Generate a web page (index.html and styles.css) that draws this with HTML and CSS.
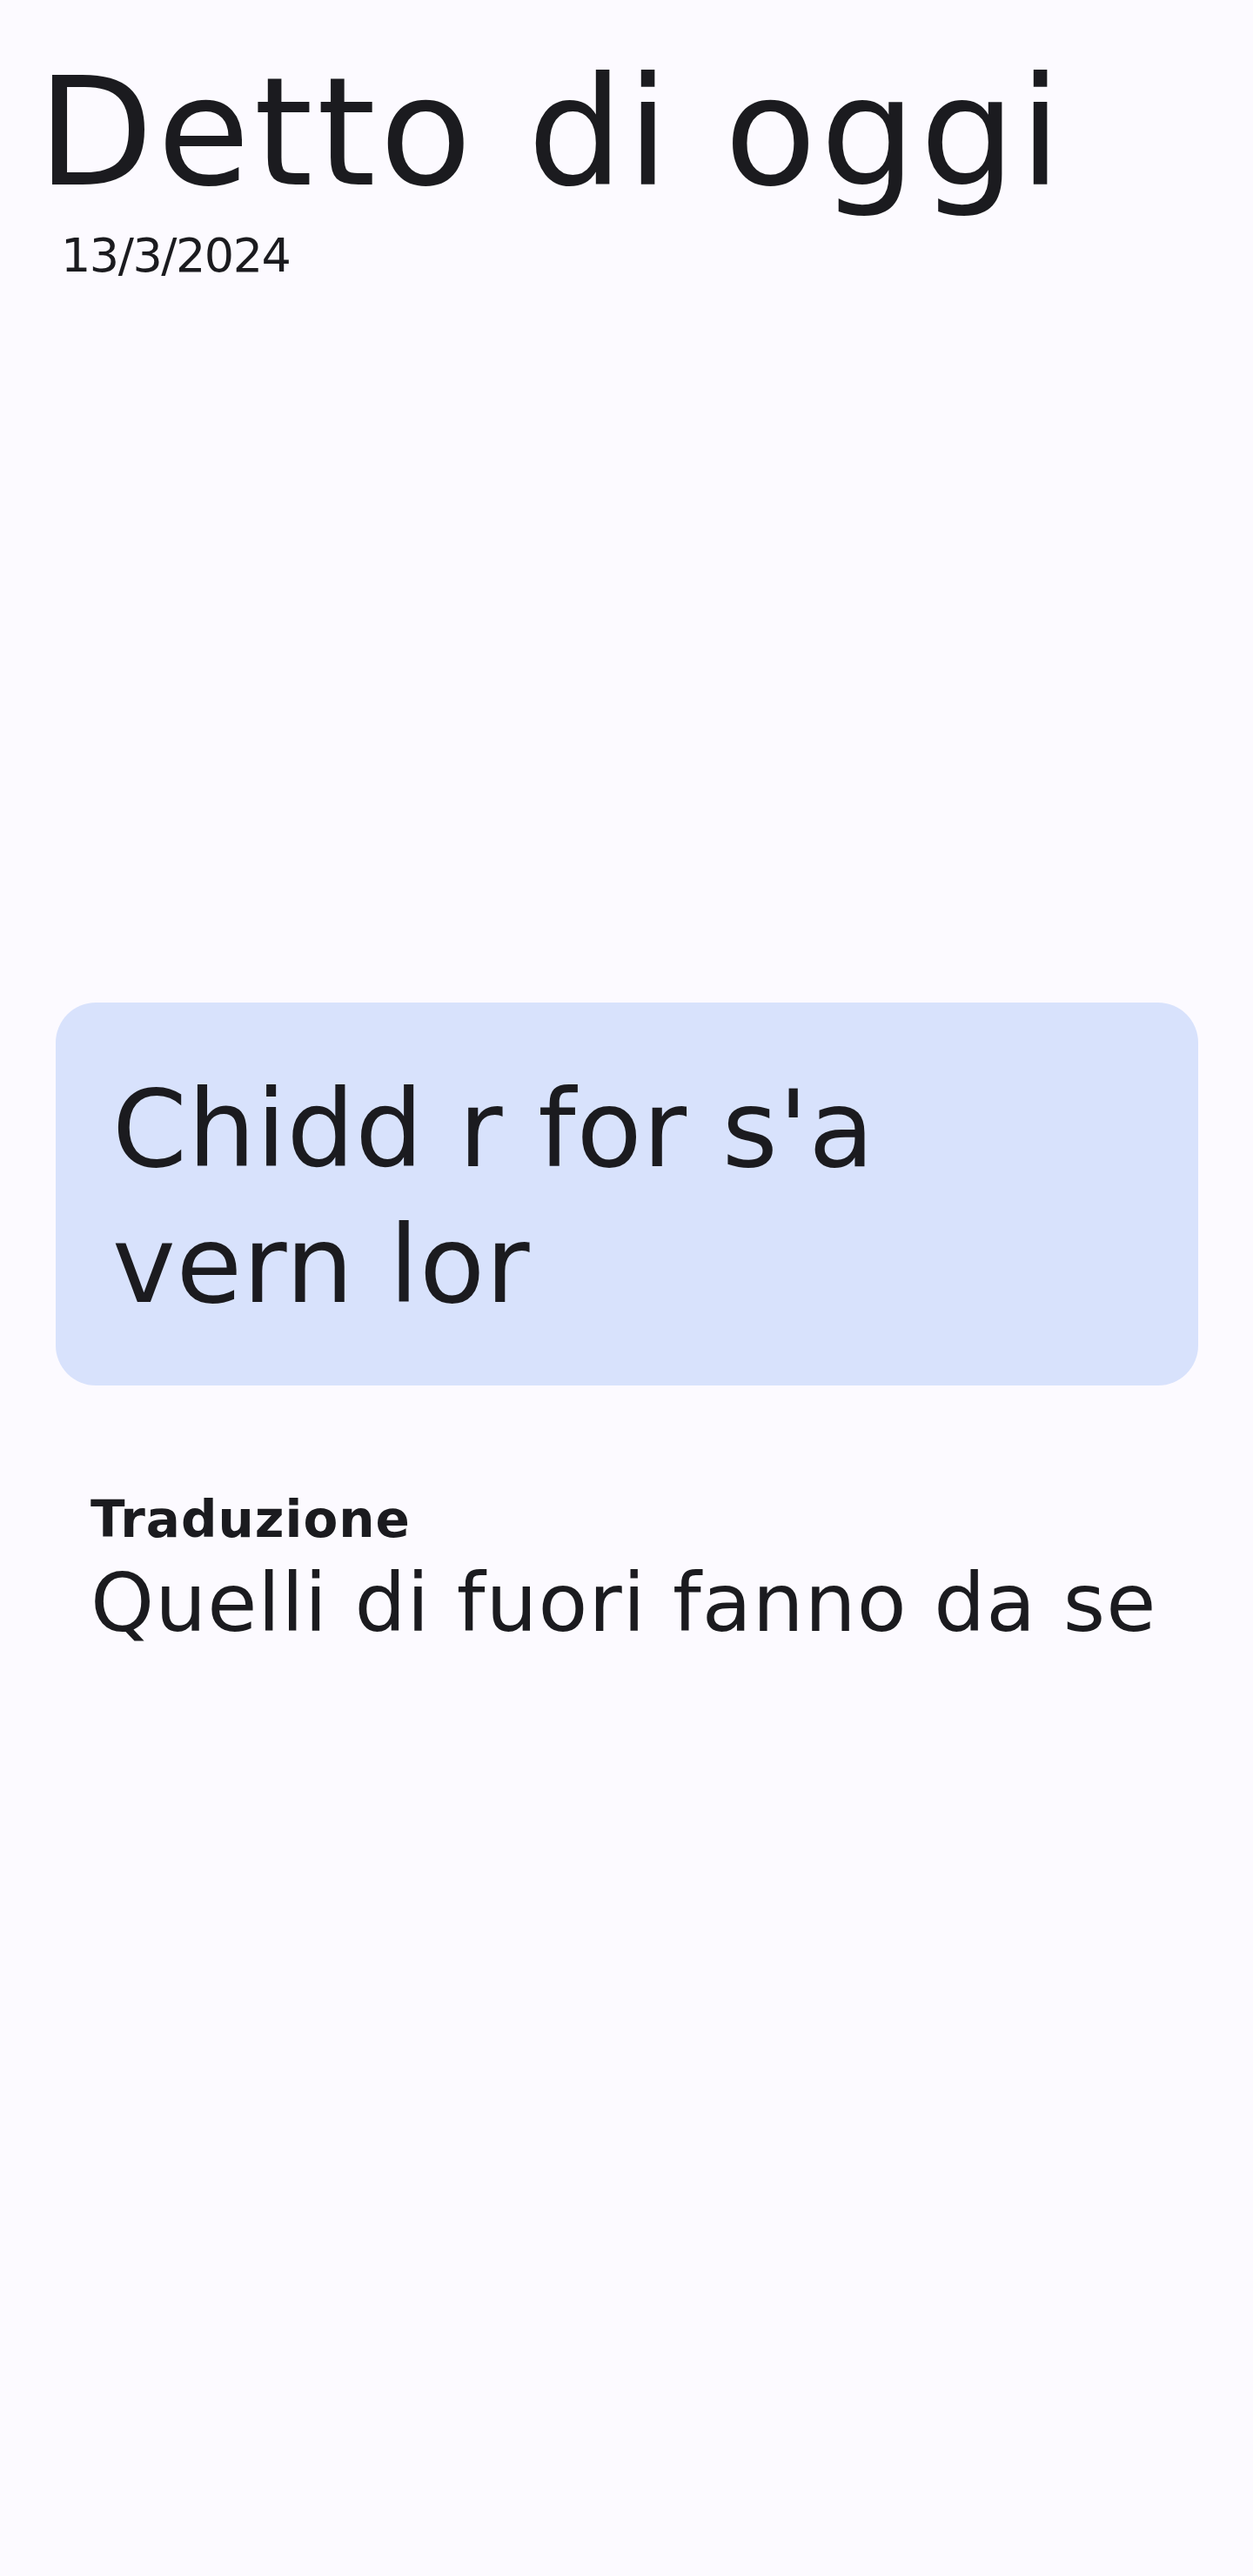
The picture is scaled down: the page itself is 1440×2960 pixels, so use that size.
FILE: index.html
```html
<!DOCTYPE html>
<html lang="it">
<head>
<meta charset="utf-8">
<title>Detto di oggi</title>
<link rel="stylesheet" href="styles.css">
</head>
<body>
<main class="screen">
  <header class="header">
    <h1 class="title">Detto di oggi</h1>
    <p class="date">13/3/2024</p>
  </header>
  <section class="saying">
    <p class="saying-text">Chidd r for s'a vern lor</p>
  </section>
  <section class="translation">
    <h2 class="translation-label">Traduzione</h2>
    <p class="translation-text">Quelli di fuori fanno da se</p>
  </section>
</main>
</body>
</html>
```
FILE: styles.css
```css
html, body {
  margin: 0;
  padding: 0;
}
body {
  background: #fcfaff;
  color: #1b1b1f;
  font-family: "DejaVu Sans", "Noto Sans", sans-serif;
  width: 1440px;
  height: 2960px;
}
.screen {
  display: flex;
  flex-direction: column;
  padding-top: 49px;
}
.header {
  display: flex;
  flex-direction: column;
  gap: 5px;
  padding-left: 43px;
}
.title {
  margin: 0;
  font-size: 173px;
  font-weight: 400;
  line-height: 1.2;
  letter-spacing: 4.5px;
}
.date {
  margin: 0;
  padding-left: 27px;
  font-size: 54px;
  line-height: 1.2;
  letter-spacing: -1.5px;
}
.saying {
  margin: 826px 63px 0 64px;
  background: #d8e2fc;
  border-radius: 46px;
  padding: 68px 64px 60px 65px;
}
.saying-text {
  margin: 0;
  max-width: 1000px;
  font-size: 123px;
  line-height: 156px;
  letter-spacing: 0.8px;
}
.translation {
  display: flex;
  flex-direction: column;
  gap: 5px;
  margin-top: 120px;
  padding-left: 104px;
}
.translation-label {
  margin: 0;
  font-size: 58px;
  font-weight: 700;
  line-height: 1.2;
  letter-spacing: 1px;
}
.translation-text {
  margin: 0;
  font-size: 93px;
  line-height: 1.2;
  letter-spacing: 1px;
}
```
